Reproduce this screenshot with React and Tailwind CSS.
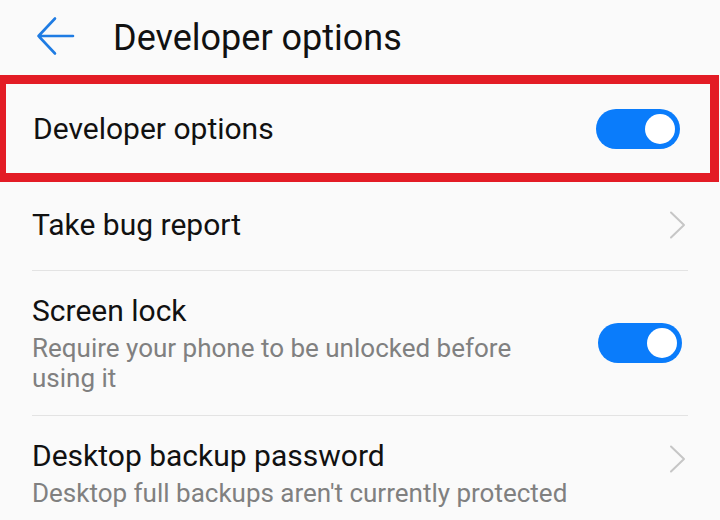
import React from 'react';

const Toggle = () => (
  <div className="relative h-[40px] w-[84px] shrink-0 rounded-full bg-[#0a7cfb]">
    <div className="absolute right-[5px] top-[5px] h-[30px] w-[30px] rounded-full bg-white" />
  </div>
);

const Chevron = () => (
  <svg width="20" height="28" viewBox="0 0 20 28" className="shrink-0" fill="none">
    <path d="M3 1.5 L16 14 L3 26.5" stroke="#c6c6c6" strokeWidth="2" strokeLinecap="round" strokeLinejoin="round" />
  </svg>
);

const App = () => {
  return (
    <div
      className="h-[520px] w-[720px] overflow-hidden bg-[#fafafa] text-[#111111]"
      style={{ fontFamily: 'Roboto, "Noto Sans", sans-serif' }}
    >
      {/* header */}
      <header className="flex h-[75px] items-center">
        <svg width="40" height="40" viewBox="0 0 40 40" className="ml-[36px] mt-[-4px]" fill="none">
          <path
            d="M2.5 20 H37 M19 2.5 L2.5 20 L19 37.5"
            stroke="#1f7ce3"
            strokeWidth="2.6"
            strokeLinecap="round"
            strokeLinejoin="round"
          />
        </svg>
        <h1 className="ml-[37px] text-[36px] leading-[42px]">Developer options</h1>
      </header>

      {/* highlighted row */}
      <div className="mr-[1px] flex h-[107px] items-center border-[9px] border-l-[6px] border-[#e31c25] pl-[27px] pr-[30px]">
        <span className="flex-1 text-[30px] leading-[36px]">Developer options</span>
        <Toggle />
      </div>

      <div className="px-[32px]">
        <div className="flex h-[89px] items-center border-b border-[#e3e3e3] pb-[2px]">
          <span className="flex-1 text-[30px] leading-[36px]">Take bug report</span>
          <Chevron />
        </div>

        <div className="flex items-center gap-6 border-b border-[#e3e3e3] py-[22px]">
          <div className="flex-1">
            <div className="text-[30px] leading-[36px]">Screen lock</div>
            <div className="mt-[4px] w-[490px] text-[26px] leading-[30px] text-[#808080]">
              Require your phone to be unlocked before using it
            </div>
          </div>
          <div className="mr-[6px]">
            <Toggle />
          </div>
        </div>

        <div className="flex items-center gap-6 pt-[22px]">
          <div className="flex-1">
            <div className="text-[30px] leading-[36px]">Desktop backup password</div>
            <div className="mt-[4px] whitespace-nowrap text-[26px] leading-[30px] text-[#808080]">
              Desktop full backups aren't currently protected
            </div>
          </div>
          <div className="mb-[28px]">
            <Chevron />
          </div>
        </div>
      </div>
    </div>
  );
};

export default App;
